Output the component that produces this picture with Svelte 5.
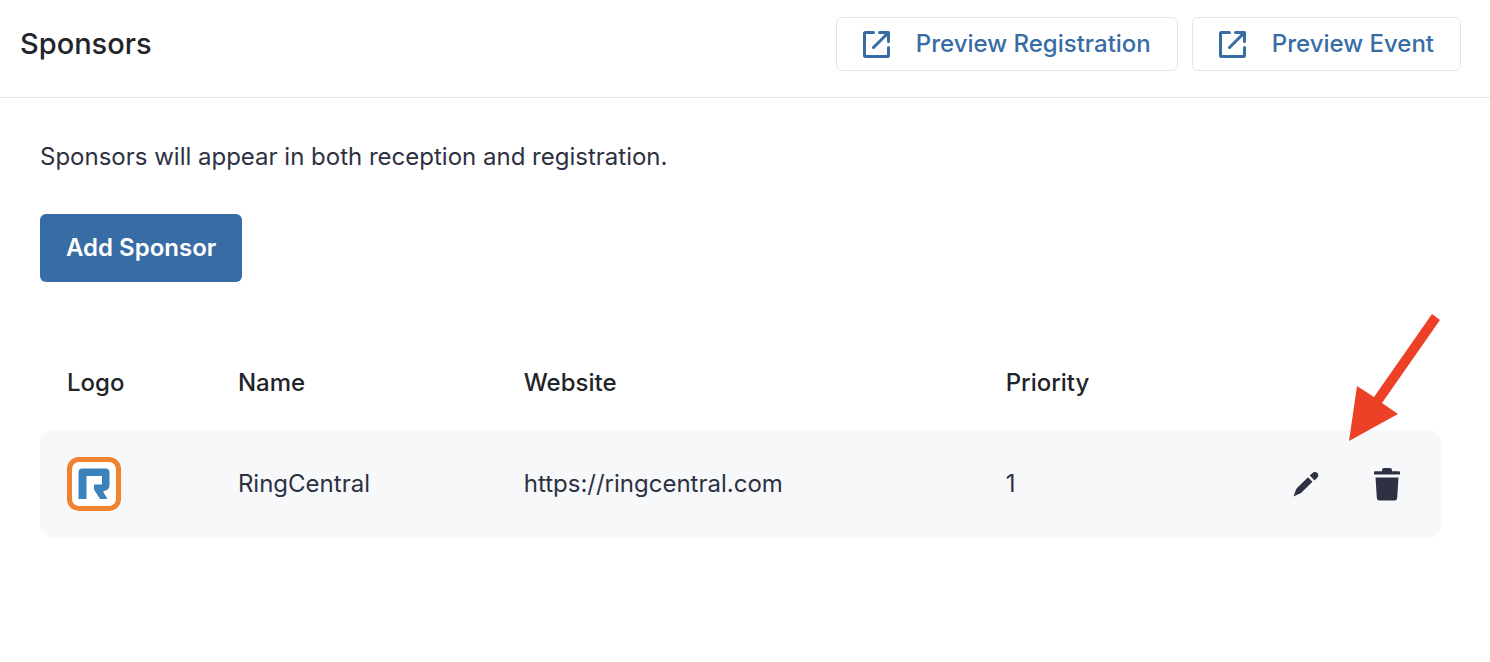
<script lang="ts">
    interface Sponsor {
        name: string;
        website: string;
        priority: number;
    }

    const previews = ['Preview Registration', 'Preview Event'];

    const sponsors: Sponsor[] = [
        { name: 'RingCentral', website: 'https://ringcentral.com', priority: 1 }
    ];
</script>

<div class="page">
    <header class="page-header">
        <h1>Sponsors</h1>
        <div class="preview-buttons">
            {#each previews as label}
                <button type="button" class="preview-button">
                    <svg class="external-icon" viewBox="0 0 27 27" aria-hidden="true">
                        <path d="M10.5 1.5H2.5Q1.5 1.5 1.5 2.500V24.5Q1.5 25.5 2.5 25.5H24.500Q25.5 25.5 25.5 24.5V16.5" />
                        <path d="M16.5 1.5H25.5V10.5" />
                        <path d="M25 2L10.5 16.5" />
                        <path d="M22.5 2.500H24.5V4.5Z" />
                    </svg>
                    <span>{label}</span>
                </button>
            {/each}
        </div>
    </header>

    <main>
        <p class="intro">Sponsors will appear in both reception and registration.</p>
        <button type="button" class="add-button">Add Sponsor</button>

        <table>
            <thead>
                <tr>
                    <th class="col-logo">Logo</th>
                    <th class="col-name">Name</th>
                    <th class="col-website">Website</th>
                    <th class="col-priority">Priority</th>
                    <td></td>
                </tr>
            </thead>
            <tbody>
                {#each sponsors as sponsor, i}
                    <tr>
                        <td>
                            <svg class="logo" viewBox="0 0 54 54" role="img" aria-label="{sponsor.name} logo">
                                <rect width="54" height="54" rx="12" fill="#f08230" />
                                <rect x="5" y="5" width="44" height="44" rx="7" fill="#fff" />
                                <path
                                    fill="#3b82ba"
                                    d="M11.5 42V15.5Q11.5 11.5 15.5 11.5H38.5Q42.5 11.5 42.5 15.5V28Q42.5 32 39 33.5L36 34.5L40.5 42H33L27 32.5V27.5H35V19H19.5V42Z"
                                />
                            </svg>
                        </td>
                        <td>{sponsor.name}</td>
                        <td>{sponsor.website}</td>
                        <td>{sponsor.priority}</td>
                        <td class="actions-cell">
                            <div class="actions">
                                <button type="button" class="icon-button" aria-label="Edit {sponsor.name}">
                                    <svg class="edit-icon" viewBox="0 0 26 26" aria-hidden="true">
                                        <path d="M0.5 25.5L3 18.5Q3.5 17.5 4.5 16.5L15 6.2L19.5 10.7L9 21Q8 22 7 22.5Z" />
                                        <path d="M16.8 4.6L19 2.4Q21.5 0 24.2 1.8Q26.5 4.5 24 7L21.6 9.4Z" />
                                    </svg>
                                </button>
                                <button type="button" class="icon-button" aria-label="Delete {sponsor.name}">
                                    <svg class="delete-icon" viewBox="0 0 26 33" aria-hidden="true">
                                        <path d="M1 3.2H8V2Q8 0 10 0H16Q18 0 18 2V3.2H25Q26 3.2 26 4.2V6.5H0V4.2Q0 3.2 1 3.2Z" />
                                        <path d="M1.5 9.5H24.5L23.2 30Q23 32.5 20.5 32.5H5.5Q3 32.5 2.8 30Z" />
                                    </svg>
                                </button>
                            </div>
                            {#if i === 0}
                                <svg class="pointer" viewBox="0 0 91 127" aria-hidden="true">
                                    <path d="M83 0L91 6L33 89L49 100L0 127L8 72L25 83Z" />
                                </svg>
                            {/if}
                        </td>
                    </tr>
                {/each}
            </tbody>
        </table>
    </main>
</div>

<style>
    :global(body) {
        margin: 0;
        background: #fff;
    }

    .page {
        color: #2d3142;
        font-family: Inter, 'Liberation Sans', sans-serif;
        font-size: 24px;
        line-height: 32px;
    }

    button {
        font: inherit;
        cursor: pointer;
    }

    svg {
        display: block;
        flex: none;
    }

    .page-header {
        display: flex;
        align-items: center;
        justify-content: space-between;
        padding: 17px 29px 26px 20px;
        border-bottom: 1px solid #e4e4e6;
    }

    h1 {
        margin: 0;
        color: #212429;
        font-size: 29px;
        font-weight: 500;
    }

    .preview-buttons {
        display: flex;
        gap: 14px;
    }

    .preview-button {
        display: flex;
        align-items: center;
        gap: 26px;
        padding: 10px 26px;
        border: 1px solid #e4e4e6;
        border-radius: 6px;
        background: #fff;
        color: #386ca5;
        font-weight: 500;
    }

    .external-icon {
        width: 27px;
        height: 27px;
        fill: none;
        stroke: currentColor;
        stroke-width: 3;
        stroke-linecap: round;
        stroke-linejoin: round;
    }

    main {
        padding: 43px 49px 40px 40px;
    }

    .intro {
        margin: 0 0 41px;
    }

    .add-button {
        padding: 18px 26px;
        border: 0;
        border-radius: 6px;
        background: #386ca5;
        color: #fff;
        font-weight: 600;
    }

    table {
        width: 100%;
        margin-top: 85px;
        border-spacing: 0;
        table-layout: fixed;
    }

    th,
    td {
        box-sizing: border-box;
    }

    th {
        padding: 0 27px 31px;
        color: #212429;
        font-weight: 500;
        text-align: left;
    }

    .col-logo {
        width: 12.2%;
    }

    .col-name {
        width: 20.4%;
    }

    .col-website {
        width: 34.4%;
    }

    .col-priority {
        width: 14%;
    }

    tbody td {
        padding: 27px;
        background: #f7f8fa;
    }

    tbody td:first-child {
        border-radius: 14px 0 0 14px;
    }

    tbody td:last-child {
        border-radius: 0 14px 14px 0;
    }

    .logo {
        width: 54px;
        height: 54px;
    }

    .actions-cell {
        position: relative;
    }

    .actions {
        display: flex;
        justify-content: flex-end;
        gap: 27px;
    }

    .icon-button {
        display: flex;
        align-items: center;
        justify-content: center;
        width: 54px;
        height: 54px;
        padding: 0;
        border: 0;
        background: none;
        color: #2d3142;
    }

    .icon-button svg {
        fill: currentColor;
    }

    .edit-icon {
        width: 26px;
        height: 26px;
    }

    .delete-icon {
        width: 26px;
        height: 33px;
    }

    /* callout arrow over the row, aimed at the edit button */
    .pointer {
        position: absolute;
        right: 1px;
        bottom: 97px;
        width: 91px;
        height: 127px;
        fill: #ec4126;
    }
</style>
